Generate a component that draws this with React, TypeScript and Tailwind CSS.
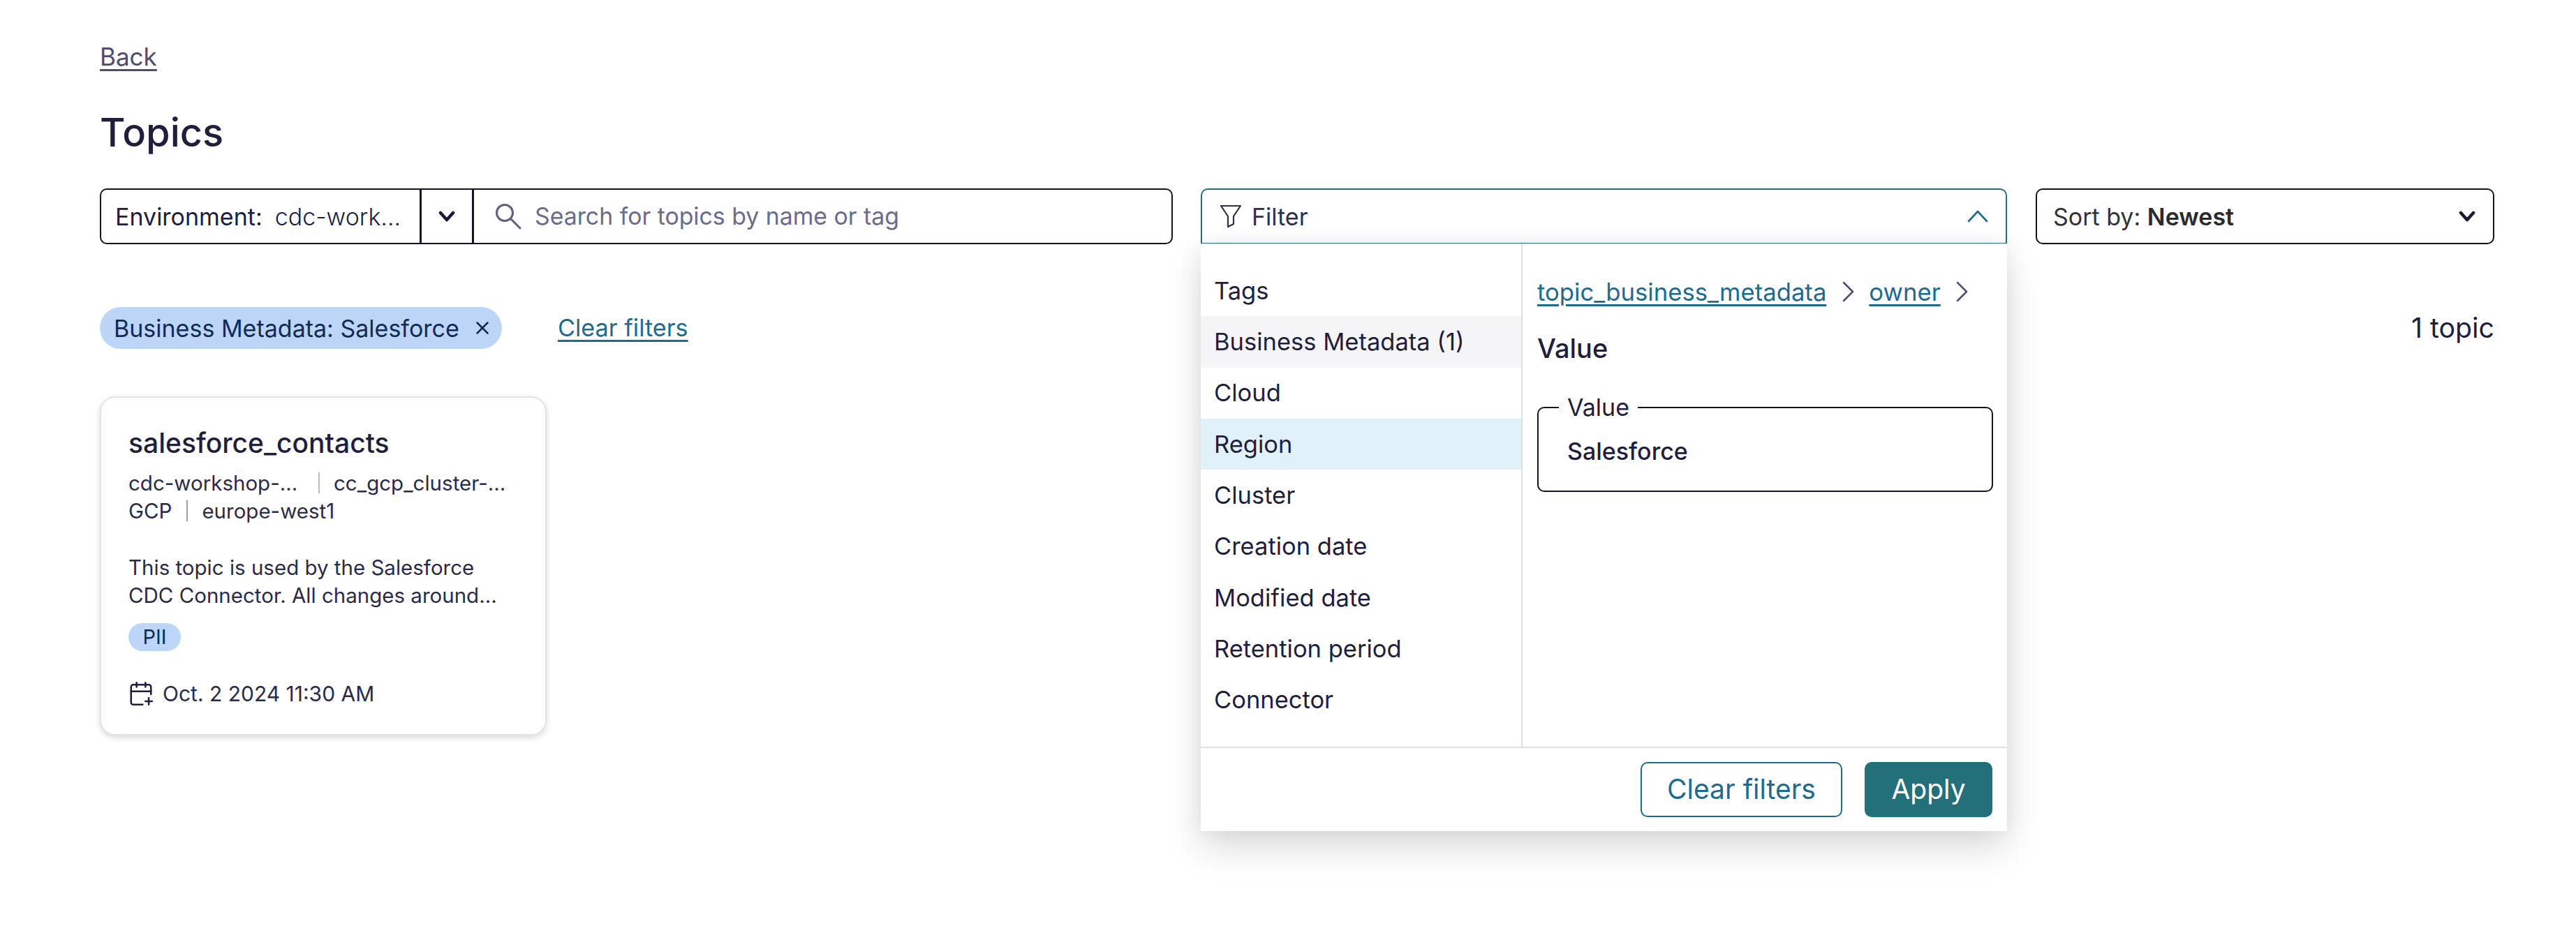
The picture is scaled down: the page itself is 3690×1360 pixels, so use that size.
import { CalendarPlus, X } from 'lucide-react'

const menuItems = [
  { label: 'Tags', bg: '' },
  { label: 'Business Metadata (1)', bg: 'bg-[#f5f5f8]' },
  { label: 'Cloud', bg: '' },
  { label: 'Region', bg: 'bg-[#e1f1f9]' },
  { label: 'Cluster', bg: '' },
  { label: 'Creation date', bg: '' },
  { label: 'Modified date', bg: '' },
  { label: 'Retention period', bg: '' },
  { label: 'Connector', bg: '' },
]

function ChevronDown() {
  return (
    <svg width="24" height="16" viewBox="0 0 24 16" fill="none" stroke="#1a1a33" strokeWidth="4.5" strokeLinecap="round" strokeLinejoin="round">
      <path d="M3 3l9 10 9-10" />
    </svg>
  )
}

function Crumb() {
  return (
    <svg width="17" height="30" viewBox="0 0 17 30" fill="none" stroke="#4f4c6f" strokeWidth="2.5" strokeLinecap="round" strokeLinejoin="round">
      <path d="M2 2l13 13L2 28" />
    </svg>
  )
}

function FilterMenu() {
  return (
    <div className="absolute left-0 top-[79px] z-10 w-[1155px] bg-white shadow-[0_24px_50px_rgba(0,0,0,0.14),0_0_30px_rgba(0,0,0,0.06)]">
      <div className="flex">
        <div className="w-[461px] border-r-2 border-[#dedee4] pb-[30px] pt-[31px]">
          {menuItems.map((item) => (
            <div key={item.label} className={`flex h-[73.3px] items-center pl-[19px] text-[34.5px] text-[#1f1f3d] ${item.bg}`}>
              {item.label}
            </div>
          ))}
        </div>
        <div className="flex-1 pl-[21px] pr-[20px]">
          <div className="mt-[48px] flex h-[42px] items-center text-[34.7px] text-[#1f6a8f]">
            <span className="underline underline-offset-[5px]">topic_business_metadata</span>
            <span className="ml-[23px] mr-[21px]"><Crumb /></span>
            <span className="underline underline-offset-[5px]">owner</span>
            <span className="ml-[22px]"><Crumb /></span>
          </div>
          <div className="mt-[37px] text-[38px] font-medium leading-[46px] text-[#1f1f3d]">Value</div>
          <fieldset className="mt-[42px] h-[141px] rounded-[10px] border-2 border-[#12122a] px-[29px]">
            <legend className="px-[12px] text-[34px] leading-[40px] text-[#1f1f3d]">Value</legend>
            <div className="mt-[22px] pl-[12px] text-[34px] font-medium leading-[42px] text-[#1f1f3d]">Salesforce</div>
          </fieldset>
        </div>
      </div>
      <div className="flex h-[121px] items-start justify-end gap-[32px] border-t-2 border-[#dedee4] pr-[21px] pt-[20px]">
        <button className="h-[79px] w-[289px] rounded-[10px] border-2 border-[#1f6a8f] text-[39px] text-[#1f6a8f]">Clear filters</button>
        <button className="h-[79px] w-[183px] rounded-[10px] bg-[#24707a] text-[39px] text-white">Apply</button>
      </div>
    </div>
  )
}

function TopicCard() {
  return (
    <div className="h-[486px] w-[640px] rounded-[22px] border-2 border-[#e4e4e8] bg-white px-[39px] pt-[40px] shadow-[0_3px_8px_rgba(0,0,0,0.16)]">
      <div className="whitespace-nowrap text-[39px] font-medium leading-[50px] text-[#1f1f3d]">salesforce_contacts</div>
      <div className="mt-[12px] flex items-center whitespace-nowrap text-[29.5px] leading-[40px] text-[#2b2b47]">
        <span className="w-[239px]">cdc-workshop-...</span>
        <span className="ml-[33px] h-[30px] w-[2px] bg-[#b9b9c9]" />
        <span className="ml-[20px]">cc_gcp_cluster-...</span>
      </div>
      <div className="flex items-center whitespace-nowrap text-[29.5px] leading-[40px] text-[#2b2b47]">
        <span>GCP</span>
        <span className="ml-[21px] h-[30px] w-[2px] bg-[#9c9cb3]" />
        <span className="ml-[20px]">europe-west1</span>
      </div>
      <div className="mt-[41px] whitespace-nowrap text-[29.5px] leading-[40px] text-[#2b2b47]">
        <div>This topic is used by the Salesforce</div>
        <div>CDC Connector. All changes around...</div>
      </div>
      <div className="mt-[20px] flex h-[40px] w-[75px] items-center justify-center rounded-full bg-[#bdd6f7] text-[29px] text-[#0f2c56]">PII</div>
      <div className="mt-[41px] flex items-center whitespace-nowrap text-[30px] leading-[40px] text-[#2b2b47]">
        <CalendarPlus size={38} strokeWidth={1.6} color="#1f1f3d" className="ml-[-1px]" />
        <span className="ml-[12px]">Oct. 2 2024 11:30 AM</span>
      </div>
    </div>
  )
}

export default function App() {
  return (
    <div className="min-h-[1360px] bg-white pl-[143px] pr-[117px] pt-[59px] font-['Inter',sans-serif]">
      <a className="block text-[35px] leading-[44px] text-[#4f4c6f] underline underline-offset-[5px]">Back</a>
      <h1 className="mt-[53px] text-[56px] font-medium leading-[68px] text-[#1f1f3d]">Topics</h1>

      <div className="mt-[46px] flex items-start">
        <div className="flex h-[80px] w-[1537px] items-stretch rounded-[10px] border-2 border-[#12122a] text-[34px]">
          <div className="flex w-[456px] items-center pl-[20px] text-[#1f1f3d]">
            <span>Environment:</span>
            <span className="ml-[18px] font-light">cdc-work...</span>
          </div>
          <div className="flex w-[78px] items-center justify-center border-x-[3px] border-[#12122a]">
            <ChevronDown />
          </div>
          <div className="flex flex-1 items-center pl-[30px] text-[#6b6b8c]">
            <svg width="38" height="38" viewBox="0 0 38 38" fill="none" stroke="#5f5f80" strokeWidth="3" strokeLinecap="round">
              <circle cx="14" cy="14" r="11.5" />
              <path d="M22.5 22.5L36 36" />
            </svg>
            <span className="ml-[19px] text-[33.8px]">Search for topics by name or tag</span>
          </div>
        </div>

        <div className="relative ml-[40px] w-[1155px]">
          <div className="flex h-[80px] items-center justify-between rounded-t-[10px] border-2 border-[#24707a] pl-[25px] pr-[25px] text-[34px] text-[#2f2f4c]">
            <div className="flex items-center">
              <svg width="32" height="34" viewBox="0 0 32 34" fill="none" stroke="#2f2f4c" strokeWidth="2.2" strokeLinejoin="round">
                <path d="M2 2h28L20 17v11l-8 4V17z" />
              </svg>
              <span className="ml-[14px]">Filter</span>
            </div>
            <svg width="30" height="18" viewBox="0 0 30 18" fill="none" stroke="#1f6a8f" strokeWidth="2.6" strokeLinecap="round" strokeLinejoin="round">
              <path d="M2 16L15 2l13 14" />
            </svg>
          </div>
          <FilterMenu />
        </div>

        <div className="ml-[41px] flex h-[80px] flex-1 items-center justify-between rounded-[10px] border-2 border-[#12122a] pl-[23px] pr-[25px] text-[34px] text-[#333333]">
          <span>
            Sort by: <span className="font-semibold text-[#2b2b2b]">Newest</span>
          </span>
          <ChevronDown />
        </div>
      </div>

      <div className="mt-[90px] flex h-[60px] items-center justify-between">
        <div className="flex items-center">
          <div className="flex h-[60px] w-[576px] items-center rounded-full bg-[#bdd6f7] pl-[20px] text-[34px] text-[#0f2c56]">
            <span>Business Metadata: Salesforce</span>
            <X size={30} strokeWidth={2} color="#0f2c56" className="ml-[18px]" />
          </div>
          <a className="ml-[80px] text-[34.2px] text-[#1f6a8f] underline underline-offset-[5px]">Clear filters</a>
        </div>
        <span className="text-[39.3px] text-[#1f1f3d]">1 topic</span>
      </div>

      <div className="mt-[68px]">
        <TopicCard />
      </div>
    </div>
  )
}
